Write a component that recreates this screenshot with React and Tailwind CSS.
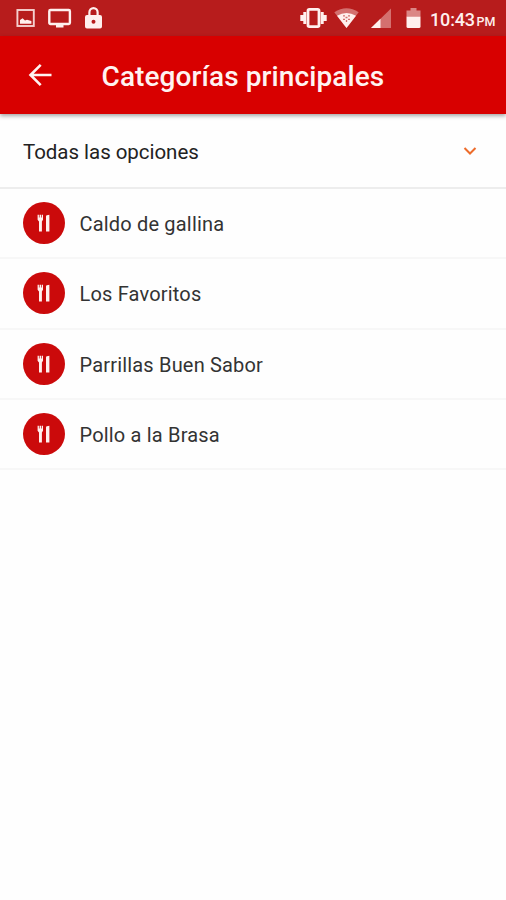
const categories = ['Caldo de gallina', 'Los Favoritos', 'Parrillas Buen Sabor', 'Pollo a la Brasa'];

function StatusBar() {
    return (
        <div className="flex h-9 items-center bg-[#b71c1c] pl-4 pr-[10px] text-[#fff0ee]">
            {/* Notifications */}
            <svg className="h-[22px] w-[19px]" viewBox="0 0 19 22" fill="none">
                <rect x="1.4" y="3" width="16.4" height="16" stroke="currentColor" strokeWidth="1.9" opacity="0.85" />
                <path d="M4 16.8v-3.8l2.6-1.7 2.4 2.2 2-.8 4.4 1.4v2.7z" fill="currentColor" />
            </svg>
            <svg className="ml-[13px] h-[22px] w-6" viewBox="0 0 24 22" fill="none">
                <rect x="1.3" y="3" width="20.6" height="14" rx="1.2" stroke="currentColor" strokeWidth="2.4" />
                <path d="M8 17h7.5v3.5H8z" fill="currentColor" />
            </svg>
            <svg className="ml-[13px] h-[22px] w-[17px]" viewBox="0 0 17 22" fill="none">
                <path d="M4.4 9V5.3a4.1 4.1 0 0 1 8.2 0V9" stroke="currentColor" strokeWidth="2.2" />
                <path
                    fillRule="evenodd"
                    d="M2 8h13a2 2 0 0 1 2 2v9.5a2 2 0 0 1-2 2H2a2 2 0 0 1-2-2V10a2 2 0 0 1 2-2zm6.5 4.7a2 2 0 1 0 0 4 2 2 0 0 0 0-4z"
                    fill="currentColor"
                />
            </svg>

            {/* System icons */}
            <svg className="ml-auto h-[22px] w-[27px]" viewBox="0 0 27 22" fill="none" stroke="currentColor">
                <rect x="8" y="2.4" width="11" height="17.2" rx="1.3" strokeWidth="2.8" />
                <path d="M4.8 5v12M22.2 5v12M1.8 8v6M25.2 8v6" strokeWidth="3" />
            </svg>
            <svg className="ml-[7px] h-[22px] w-[25px]" viewBox="0 0 25 22" fill="currentColor">
                <path d="M12.5 21 .3 5.2Q12.5-2.8 24.7 5.2z" opacity="0.4" />
                <path d="M12.5 21 3 8.8Q12.5 3 22 8.8z" />
                <path d="M9 8.8h2M14 8.8h2M9 12.3h2M14 12.3h2M11.5 10.5h2M12.5 13v2" stroke="#b71c1c" strokeWidth="1.3" opacity="0.6" />
            </svg>
            <svg className="ml-3 h-[22px] w-5" viewBox="0 0 20 22" fill="currentColor">
                <path d="M0 21 20 1.5V21z" opacity="0.4" />
                <path d="M0 21l9.5-9.3V21z" />
            </svg>
            <svg className="ml-[15px] h-[22px] w-[15px]" viewBox="0 0 15 22" fill="currentColor">
                <path d="M.5 9.5v-6h4V1h6v2.5h4v6z" opacity="0.5" />
                <path d="M.5 9.5h14v10a1.5 1.5 0 0 1-1.5 1.5H2a1.5 1.5 0 0 1-1.5-1.5z" />
            </svg>
            <div className="ml-[9px] flex items-baseline whitespace-nowrap pt-[3px] font-medium">
                <span className="w-[46.5px] text-[18px] leading-6 tracking-[-0.15px]">10:43</span>
                <span className="w-[19.5px] text-[12.5px]">PM</span>
            </div>
        </div>
    );
}

function CategoryRow({ name }) {
    return (
        <li className="flex h-[70.3px] items-center border-b-2 border-[#f7f7f7] pl-[23px]">
            <span className="flex size-[42px] shrink-0 items-center justify-center rounded-full bg-[#cb0a0b]">
                <svg className="h-[18px] w-3.5" viewBox="0 0 14 18" fill="#fff0ee">
                    <path d="M.6.7h1.3v2.8h.7V.7h1.4v2.8h.7V.7H6v5L4.9 7.4V17.5H2V7.4L.6 5.7z" />
                    <path d="M9 2.2Q9.2.7 12.4.7v16.8H9z" />
                </svg>
            </span>
            <span className="ml-[14.5px] pt-[2px] text-[20px] tracking-[0.18px] text-[#333333]">{name}</span>
        </li>
    );
}

export default function App() {
    return (
        <div className="h-[900px] w-[506px] overflow-hidden bg-[#fefefe] font-['Roboto',sans-serif]">
            <StatusBar />

            {/* App bar */}
            <header className="relative flex h-[78px] items-center bg-[#d80000] pl-7 text-[#fff3f1] shadow-[0_2px_4px_rgba(0,0,0,0.35)]">
                <svg className="h-6 w-6" viewBox="0 0 24 24" fill="none" stroke="currentColor" strokeWidth="2.6">
                    <path d="M23.5 12H2.5M12.7 1.8 2.5 12l10.2 10.2" />
                </svg>
                <h1 className="ml-[49.5px] pt-[3px] text-[28px] font-medium tracking-[0.1px]">Categorías principales</h1>
            </header>

            {/* All options */}
            <button className="flex h-[75px] w-full items-center justify-between border-b-2 border-[#ededed] pl-[23px] pr-[29px] text-[20.5px] text-[#222222]">
                <span className="pt-[4px] tracking-[-0.04px]">Todas las opciones</span>
                <svg className="h-2 w-[14px]" viewBox="0 0 14 8" fill="none" stroke="#ed6c2b" strokeWidth="2">
                    <path d="M1.5 1 7 6.5 12.5 1" />
                </svg>
            </button>

            <ul>
                {categories.map((name) => (
                    <CategoryRow key={name} name={name} />
                ))}
            </ul>
        </div>
    );
}
